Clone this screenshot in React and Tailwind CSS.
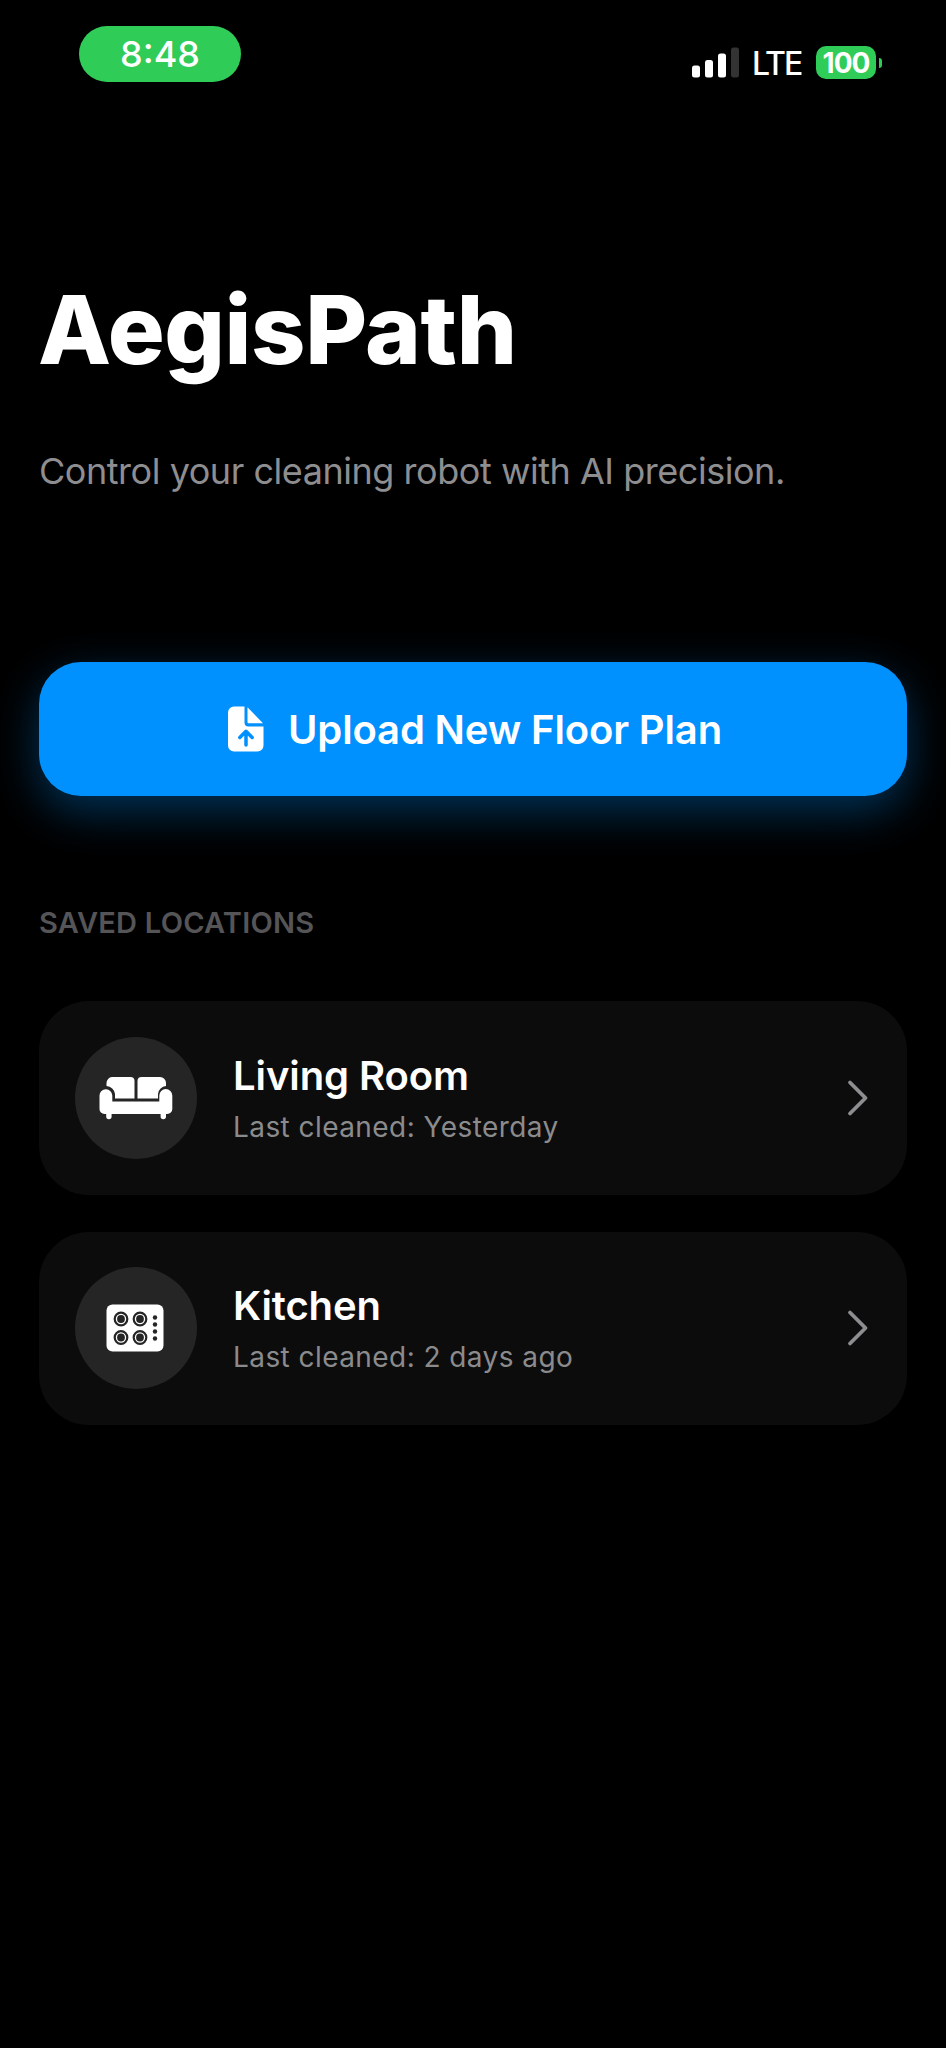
import React from 'react';

const SofaIcon = () => (
  <svg width="74" height="44" viewBox="0 0 74 44" fill="white">
    <path d="M13 1h18.500a4 4 0 0 1 4 4v17.500H16V18a9 9 0 0 0-8.500-8V7a6 6 0 0 1 5.500-6z" />
    <path d="M61 1H42.500a4 4 0 0 0-4 4v17.500H59V18a9 9 0 0 1 8-8V7a6 6 0 0 0-6-6z" />
    <path d="M7 13.300a6.300 6.300 0 0 1 6.300 6.300V25.500h47V19.600a6.300 6.300 0 0 1 13 0V33a5 5 0 0 1-5 5H67v2.500a2.700 2.700 0 0 1-5.400 0V38H12.600v2.500a2.700 2.700 0 0 1-5.400 0V38H5.500a5 5 0 0 1-5-5V19.600A6.300 6.300 0 0 1 7 13.300z" />
  </svg>
);

const burners = [[15, 15], [34, 15], [15, 33.500], [34, 33.500]];

const StoveIcon = () => (
  <svg className="mr-[2px]" width="58" height="48" viewBox="0 0 58 48">
    <rect x="0.500" y="0.500" width="57" height="47" rx="6" fill="white" />
    {burners.map(([x, y]) => (
      <g key={`${x}-${y}`}>
        <circle cx={x} cy={y} r="6.300" fill="none" stroke="#252525" strokeWidth="2.200" />
        <circle cx={x} cy={y} r="3.900" fill="#252525" />
      </g>
    ))}
    {[13.500, 20.500, 27.500, 34.500].map((y) => (
      <circle key={y} cx="49" cy={y} r="2.200" fill="#252525" />
    ))}
  </svg>
);

const UploadIcon = () => (
  <svg width="36" height="46" viewBox="0 0 36 46">
    <path fill="white" d="M6 .5h10.500v16a4 4 0 0 0 4 4H35.500V39.500a6 6 0 0 1-6 6H6a6 6 0 0 1-6-6v-33a6 6 0 0 1 6-6z" />
    <path fill="white" d="M19.500 1.200 35 17.200H20.500a1 1 0 0 1-1-1z" />
    <path d="M18 39V26M11.800 31.500l6.200-6.200 6.200 6.200" fill="none" stroke="#0091ff" strokeWidth="3.500" strokeLinecap="round" strokeLinejoin="round" />
  </svg>
);

const ChevronIcon = () => (
  <svg width="22" height="38" viewBox="0 0 22 38" fill="none">
    <path d="M3 3.500 18.500 19 3 34.500" stroke="#8e8e90" strokeWidth="3.800" strokeLinecap="round" strokeLinejoin="round" />
  </svg>
);

const StatusBar = () => (
  <header className="flex items-start justify-between pl-[79px] pr-[64px] pt-[26px]">
    <div className="flex h-14 w-[162px] items-center justify-center rounded-full bg-[#30cc58]">
      <span className="text-[36px] leading-none font-medium">8:48</span>
    </div>
    <div className="mt-5 flex h-[33px] items-center">
      <svg width="48" height="31" viewBox="0 0 48 31" fill="white">
        <rect x="0" y="18.500" width="8" height="12" rx="2.500" />
        <rect x="13" y="13" width="8" height="17.500" rx="2.500" />
        <rect x="26" y="6.500" width="8" height="24" rx="2.500" />
        <rect x="39" y="0.500" width="8" height="30" rx="2.500" fill="#333333" />
      </svg>
      <span className="ml-[12px] w-[64px] pt-[2px] text-[32px] leading-none font-medium tracking-[-2px]">LTE</span>
      <span className="flex h-[33px] w-[60px] items-center justify-center rounded-[10px] bg-[#30cc58] text-[28px] leading-none font-bold tracking-[-1px]">
        100
      </span>
      <span className="ml-[3px] h-[10px] w-[3px] rounded-r-full bg-[#30cc58]" />
    </div>
  </header>
);

const locations = [
  { name: 'Living Room', cleaned: 'Yesterday', Icon: SofaIcon },
  { name: 'Kitchen', cleaned: '2 days ago', Icon: StoveIcon },
];

const LocationCard = ({ name, cleaned, Icon }) => (
  <button className="flex h-[193.5px] w-full items-center rounded-[50px] bg-[#0c0c0c] pl-9 pr-[38px] text-left">
    <span className="flex size-[122px] shrink-0 items-center justify-center rounded-full bg-[#252525]">
      <Icon />
    </span>
    <span className="ml-9 flex flex-1 flex-col pt-1">
      <span className="text-[40px] leading-[54px] font-semibold tracking-[-0.1px]">{name}</span>
      <span className="text-[28px] leading-[48px] tracking-[0.43px] text-[#8b8b8d]">Last cleaned: {cleaned}</span>
    </span>
    <ChevronIcon />
  </button>
);

const App = () => (
  <div className="h-[2048px] w-[946px] overflow-hidden bg-black font-['Inter',sans-serif] text-white">
    <StatusBar />
    <main className="px-[39px]">
      <h1 className="-ml-px mt-[190px] text-[95px] leading-[116px] font-extrabold tracking-[-0.4px]">AegisPath</h1>
      <p className="mt-[61px] text-[36px] leading-[44px] tracking-[-0.46px] text-[#8e8e90]">
        Control your cleaning robot with AI precision.
      </p>
      <button className="mt-[169px] flex h-[134px] w-full items-center justify-center gap-6 rounded-[42px] bg-[#0091ff] pl-1 shadow-[0_15px_46px_rgba(0,145,255,0.35)]">
        <UploadIcon />
        <span className="pt-px text-[40px] leading-none font-semibold tracking-[-0.15px]">Upload New Floor Plan</span>
      </button>
      <h2 className="mt-[109px] text-[29px] leading-[36px] font-semibold tracking-[0.24px] text-[#555557]">SAVED LOCATIONS</h2>
      <div className="mt-[60px] flex flex-col gap-[37px]">
        {locations.map((location) => (
          <LocationCard key={location.name} {...location} />
        ))}
      </div>
    </main>
  </div>
);

export default App;
